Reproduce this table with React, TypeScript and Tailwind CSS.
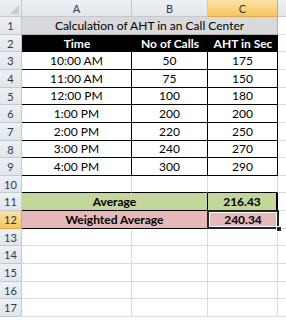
const rowH = [
  'h-[18px]', 'h-[17px]', 'h-[18px]', 'h-[18px]', 'h-[17px]', 'h-[18px]',
  'h-[18px]', 'h-[17px]', 'h-[18px]', 'h-[17px]', 'h-[18px]', 'h-[18px]',
  'h-[17px]', 'h-[18px]', 'h-[18px]', 'h-[17px]', 'h-[18px]',
]

const data = [
  ['10:00 AM', '50', '175'],
  ['11:00 AM', '75', '150'],
  ['12:00 PM', '100', '180'],
  ['1:00 PM', '200', '200'],
  ['2:00 PM', '220', '250'],
  ['3:00 PM', '240', '270'],
  ['4:00 PM', '300', '290'],
]

function RowHead({ n, active = false }: { n: number; active?: boolean }) {
  return (
    <div
      className={`w-[22px] shrink-0 flex items-center justify-center border-r border-b text-[11px] ${
        active
          ? 'bg-gradient-to-b from-[#fbe3a6] to-[#f4c65f] border-[#e2a94a] text-[#333]'
          : 'bg-gradient-to-b from-[#edf0f4] to-[#e2e6eb] border-[#c4c9d1] text-[#2b3a52]'
      }`}
    >
      {n}
    </div>
  )
}

function Filler() {
  return <div className="flex-1 border-b border-[#dadcdd]" />
}

export default function App() {
  return (
    <div className="w-[286px] h-[320px] overflow-hidden bg-white font-['Lato','Liberation_Sans',sans-serif] text-[12px] text-black leading-none">
      {/* column headers */}
      <div className="flex h-[17px]">
        <div className="w-[22px] shrink-0 relative bg-gradient-to-b from-[#edf0f4] to-[#e2e6eb] border-r border-b border-[#c4c9d1]">
          <svg className="absolute right-[2px] bottom-[2px]" width="9" height="9" viewBox="0 0 9 9">
            <polygon points="9,0 9,9 0,9" fill="#c9ced6" />
          </svg>
        </div>
        <div className="w-[110px] shrink-0 flex items-center justify-center border-r border-b border-[#c4c9d1] bg-gradient-to-b from-[#edf0f4] to-[#e2e6eb] text-[11px] text-[#2b3a52]">A</div>
        <div className="w-[76px] shrink-0 flex items-center justify-center border-r border-b border-[#c4c9d1] bg-gradient-to-b from-[#edf0f4] to-[#e2e6eb] text-[11px] text-[#2b3a52]">B</div>
        <div className="w-[70px] shrink-0 flex items-center justify-center border-r border-b border-[#e2a94a] bg-gradient-to-b from-[#fbe3a6] to-[#f4c65f] text-[11px] text-[#333]">C</div>
        <div className="flex-1 border-b border-[#c4c9d1] bg-gradient-to-b from-[#edf0f4] to-[#e2e6eb]" />
      </div>

      {/* row 1 */}
      <div className={`flex ${rowH[0]}`}>
        <RowHead n={1} />
        <div className="w-[256px] shrink-0 flex items-center justify-center bg-[#d9d9d9] border-r border-b border-[#b0b0b0]">
          Calculation of AHT in an Call Center
        </div>
        <Filler />
      </div>

      {/* row 2 */}
      <div className={`flex ${rowH[1]}`}>
        <RowHead n={2} />
        <div className="w-[110px] shrink-0 flex items-center justify-center bg-black text-white font-bold">Time</div>
        <div className="w-[76px] shrink-0 flex items-center justify-center bg-black text-white font-bold">No of Calls</div>
        <div className="w-[70px] shrink-0 flex items-center justify-center bg-black text-white font-bold">AHT in Sec</div>
        <Filler />
      </div>

      {/* rows 3-9 */}
      {data.map((r, i) => (
        <div key={i} className={`flex ${rowH[i + 2]}`}>
          <RowHead n={i + 3} />
          <div className="w-[110px] shrink-0 flex items-center justify-center border-r border-b border-black">{r[0]}</div>
          <div className="w-[76px] shrink-0 flex items-center justify-center border-r border-b border-black">{r[1]}</div>
          <div className="w-[70px] shrink-0 flex items-center justify-center border-r border-b border-black">{r[2]}</div>
          <Filler />
        </div>
      ))}

      {/* row 10 */}
      <div className={`flex ${rowH[9]}`}>
        <RowHead n={10} />
        <div className="w-[110px] shrink-0 border-r border-r-[#dadcdd] border-b border-b-black" />
        <div className="w-[76px] shrink-0 border-r border-r-[#dadcdd] border-b border-b-black" />
        <div className="w-[70px] shrink-0 border-r border-r-[#dadcdd] border-b border-b-black" />
        <Filler />
      </div>

      {/* row 11 */}
      <div className={`flex ${rowH[10]}`}>
        <RowHead n={11} />
        <div className="w-[186px] shrink-0 flex items-center justify-center bg-[#c4d79b] border-r border-b border-black font-bold">Average</div>
        <div className="w-[70px] shrink-0 flex items-center justify-center bg-[#c4d79b] border-r-2 border-b border-black font-bold">216.43</div>
        <Filler />
      </div>

      {/* row 12 */}
      <div className={`flex ${rowH[11]}`}>
        <RowHead n={12} active />
        <div className="w-[186px] shrink-0 flex items-center justify-center bg-[#e6b8b7] border-r border-b border-black font-bold">Weighted Average</div>
        <div className="w-[70px] shrink-0 relative flex items-center justify-center bg-[#e6b8b7] border-b border-black font-bold">
          240.34
          <div className="absolute inset-[-1px] border-2 border-[#222] pointer-events-none">
            <div className="absolute inset-0 border border-white" />
          </div>
          <div className="absolute right-[-4px] bottom-[-4px] w-[6px] h-[6px] bg-[#222] border border-white" />
        </div>
        <Filler />
      </div>

      {/* rows 13-17 */}
      {[13, 14, 15, 16, 17].map((n) => (
        <div key={n} className={`flex ${rowH[n - 1]}`}>
          <RowHead n={n} />
          <div className="w-[110px] shrink-0 border-r border-b border-[#dadcdd]" />
          <div className="w-[76px] shrink-0 border-r border-b border-[#dadcdd]" />
          <div className="w-[70px] shrink-0 border-r border-b border-[#dadcdd]" />
          <Filler />
        </div>
      ))}
    </div>
  )
}
